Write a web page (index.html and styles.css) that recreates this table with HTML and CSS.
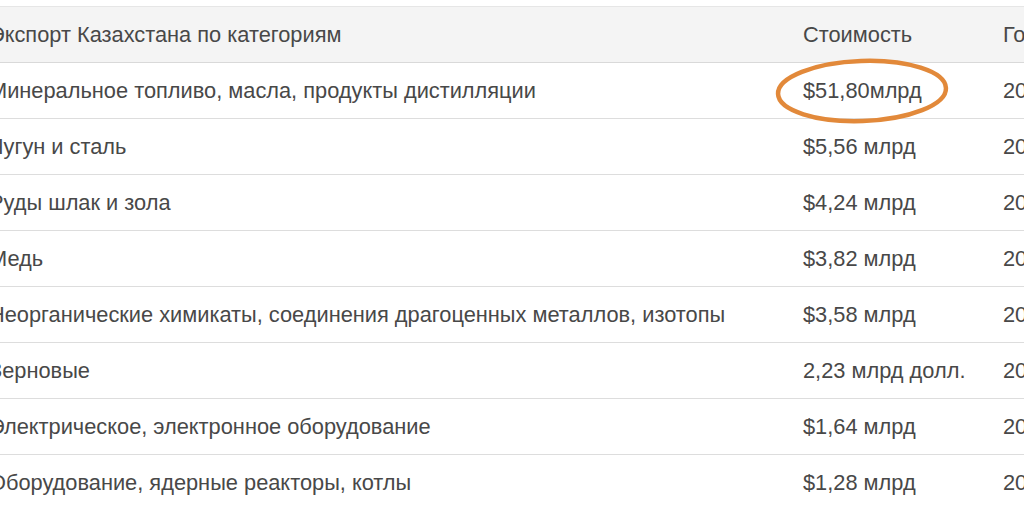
FILE: index.html
```html
<!DOCTYPE html>
<html lang="ru">
<head>
    <meta charset="UTF-8">
    <title>Экспорт Казахстана</title>
    <link rel="stylesheet" href="styles.css">
</head>
<body>
    <div class="wrap">
        <table class="export-table">
            <colgroup>
                <col class="col-name">
                <col class="col-cost">
                <col class="col-year">
            </colgroup>
            <thead>
                <tr>
                    <th>Экспорт Казахстана по категориям</th>
                    <th>Стоимость</th>
                    <th>Год</th>
                </tr>
            </thead>
            <tbody>
                <tr>
                    <td>Минеральное топливо, масла, продукты дистилляции</td>
                    <td class="marked">$51,80млрд</td>
                    <td>2019</td>
                </tr>
                <tr>
                    <td>Чугун и сталь</td>
                    <td>$5,56 млрд</td>
                    <td>2019</td>
                </tr>
                <tr>
                    <td>Руды шлак и зола</td>
                    <td>$4,24 млрд</td>
                    <td>2019</td>
                </tr>
                <tr>
                    <td>Медь</td>
                    <td>$3,82 млрд</td>
                    <td>2019</td>
                </tr>
                <tr>
                    <td>Неорганические химикаты, соединения драгоценных металлов, изотопы</td>
                    <td>$3,58 млрд</td>
                    <td>2019</td>
                </tr>
                <tr>
                    <td>Зерновые</td>
                    <td>2,23 млрд долл.</td>
                    <td>2019</td>
                </tr>
                <tr>
                    <td>Электрическое, электронное оборудование</td>
                    <td>$1,64 млрд</td>
                    <td>2019</td>
                </tr>
                <tr>
                    <td>Оборудование, ядерные реакторы, котлы</td>
                    <td>$1,28 млрд</td>
                    <td>2019</td>
                </tr>
            </tbody>
        </table>

        <!-- hand-drawn circle around the biggest value -->
        <svg class="circle-mark" width="184" height="76" viewBox="0 0 184 76">
            <ellipse cx="92" cy="38" rx="84" ry="30" fill="none" stroke="#e2893a" stroke-width="4.5" transform="rotate(-2 92 38)"/>
        </svg>
    </div>
</body>
</html>
```

FILE: styles.css
```css
body {
    margin: 0;
    background-color: #ffffff;
    font-family: 'Liberation Sans', Arial, sans-serif;
    overflow: hidden;
}

.wrap {
    position: relative;
    padding-top: 6px;
}

.export-table {
    border-collapse: collapse;
    table-layout: fixed;
    width: 1100px;
    margin-left: -21px;
    font-size: 21.8px;
    color: #484848;
}

.col-name {
    width: 814px;
}

.col-cost {
    width: 200px;
}

.col-year {
    width: 86px;
}

th, td {
    height: 55px;
    padding: 0 10px;
    text-align: left;
    font-weight: normal;
    white-space: nowrap;
    border-top: 1px solid #dddddd;
}

thead tr {
    background-color: #f4f4f4;
}

thead th {
    border-top: 1px solid #e6e6e6;
    border-bottom: 1px solid #d9d9d9;
}

.circle-mark {
    position: absolute;
    left: 770px;
    top: 53px;
}
```
